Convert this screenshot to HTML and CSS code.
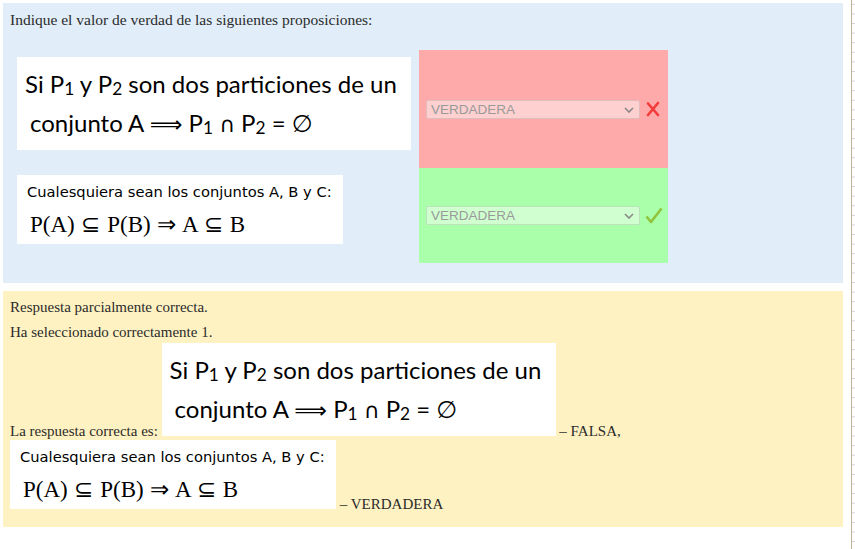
FILE: index.html
```html
<!DOCTYPE html>
<html lang="es">
<head>
<meta charset="utf-8">
<title>Pregunta</title>
<link rel="stylesheet" href="styles.css">
</head>
<body>
<div class="page">
  <div class="main">
    <div class="formulation">
      <p class="qtext">Indique el valor de verdad de las siguientes proposiciones:</p>
      <div class="answers">
        <div class="qcell">
          <div class="pic pic1">
            <div class="l1">Si P<sub>1</sub> y P<sub>2</sub> son dos particiones de un</div>
            <div class="l2">conjunto A <span class="arr">⟹</span> P<sub>1</sub> <span class="cap">∩</span> P<sub>2</sub> = ∅</div>
          </div>
        </div>
        <div class="acell incorrect">
          <div class="select"><span>VERDADERA</span><svg class="chev" width="10" height="6" viewBox="0 0 10 6"><path d="M1 1 L5 5 L9 1" fill="none" stroke="#888" stroke-width="1.6"/></svg></div>
          <svg class="icon" width="16" height="16" viewBox="0 0 16 16"><path d="M3 2.5 Q8 8 13 14 M13 2 Q8 8 3 14" fill="none" stroke="#f53a3a" stroke-width="2.6" stroke-linecap="round"/></svg>
        </div>
        <div class="qcell">
          <div class="pic pic2">
            <div class="m1">Cualesquiera sean los conjuntos A, B y C:</div>
            <div class="m2">P(A) ⊆ P(B) ⇒ A ⊆ B</div>
          </div>
        </div>
        <div class="acell correct">
          <div class="select"><span>VERDADERA</span><svg class="chev" width="10" height="6" viewBox="0 0 10 6"><path d="M1 1 L5 5 L9 1" fill="none" stroke="#888" stroke-width="1.6"/></svg></div>
          <svg class="icon" width="18" height="17" viewBox="0 0 18 17"><path d="M1.5 9.5 L6 15 L16.5 1.5" fill="none" stroke="#8fc43c" stroke-width="2.6" stroke-linejoin="round"/></svg>
        </div>
      </div>
    </div>
    <div class="outcome">
      <p class="fb1">Respuesta parcialmente correcta.</p>
      <p class="fb2">Ha seleccionado correctamente 1.</p>
      <div class="rightanswer">La respuesta correcta es: <span class="pic pic1 inl">
            <span class="l1">Si P<sub>1</sub> y P<sub>2</sub> son dos particiones de un</span>
            <span class="l2">conjunto A <span class="arr">⟹</span> P<sub>1</sub> <span class="cap">∩</span> P<sub>2</sub> = ∅</span>
          </span> – FALSA, <span class="pic pic2 inl">
            <span class="m1">Cualesquiera sean los conjuntos A, B y C:</span>
            <span class="m2">P(A) ⊆ P(B) ⇒ A ⊆ B</span>
          </span> – VERDADERA</div>
    </div>
  </div>
  <div class="ruler"></div>
</div>
</body>
</html>
```
FILE: styles.css
```css
html, body {
  margin: 0;
  padding: 0;
  background: #ffffff;
}
.page {
  display: flex;
  height: 549px;
  overflow: hidden;
}
.main {
  width: 840px;
  padding: 3px 0 0 3px;
  font-family: "Liberation Serif", serif;
  font-size: 15px;
  color: #2b2b2b;
}
.ruler {
  margin-left: 8px;
  width: 4px;
  height: 549px;
  border-left: 1px solid #b7b596;
  box-sizing: border-box;
  background: repeating-linear-gradient(to bottom, transparent 0, transparent 4px, #d4d4d4 4px, #d4d4d4 5px, transparent 5px, transparent 9.6px);
  background-size: 3px 9.6px;
  background-repeat: repeat-y;
}
.formulation {
  background: #e1eef9;
  height: 280px;
  box-sizing: border-box;
  padding: 7px;
}
.qtext {
  margin: 0 0 20px 0;
  line-height: 20px;
  font-size: 15.5px;
}
.answers {
  display: grid;
  grid-template-columns: 409px 249px;
  grid-template-rows: 118px 95px;
}
.qcell {
  padding: 7px 0 0 7px;
}
.acell {
  display: flex;
  align-items: center;
  padding-left: 7px;
  gap: 5px;
}
.acell.incorrect { background: #ffaaaa; }
.acell.correct { background: #aaffaa; }
.select {
  width: 214px;
  height: 19px;
  box-sizing: border-box;
  border: 1px solid rgba(120, 120, 120, 0.22);
  border-radius: 2px;
  background: rgba(255, 255, 255, 0.45);
  display: flex;
  align-items: center;
  justify-content: space-between;
  padding: 0 5px 0 4px;
  font-family: "Liberation Sans", sans-serif;
  font-size: 13.5px;
  color: #9a9a9a;
}
.chev { margin-top: 1px; }
.icon { display: block; }

.pic {
  background: #ffffff;
  box-sizing: border-box;
  color: #000;
}
.pic1 {
  width: 394px;
  height: 93px;
  padding: 7px 0 0 8px;
  font-family: Lato, "DejaVu Sans", sans-serif;
  font-size: 24px;
}
.pic1 .l1, .pic1 .l2 {
  display: block;
  line-height: 39px;
  white-space: nowrap;
}
.pic1 .l2 { padding-left: 5px; }
.pic1 sub {
  font-size: 0.72em;
  vertical-align: -0.1em;
  line-height: 0;
}
.arr {
  font-family: "DejaVu Sans", sans-serif;
  font-size: 0.95em;
}
.cap {
  font-family: "DejaVu Sans", sans-serif;
  font-size: 0.9em;
}
.pic2 {
  width: 326px;
  height: 69px;
  padding: 7px 0 0 10px;
}
.pic2 .m1 {
  display: block;
  font-family: "DejaVu Sans", sans-serif;
  font-size: 14.7px;
  line-height: 20px;
  white-space: nowrap;
}
.pic2 .m2 {
  display: block;
  margin-top: 5px;
  padding-left: 3px;
  font-family: "Liberation Serif", serif;
  font-size: 23px;
  line-height: 35px;
  word-spacing: 1px;
  white-space: nowrap;
}
.pic.inl {
  display: inline-block;
  overflow: hidden;
  vertical-align: baseline;
}

.outcome {
  margin-top: 8px;
  background: #fff2c2;
  height: 236px;
  box-sizing: border-box;
  padding: 7px;
}
.fb1 {
  margin: 0 0 7px 0;
  line-height: 18px;
}
.fb2 {
  margin: 0 0 2px 0;
  line-height: 18px;
}
.rightanswer {
  line-height: 18px;
}
```
